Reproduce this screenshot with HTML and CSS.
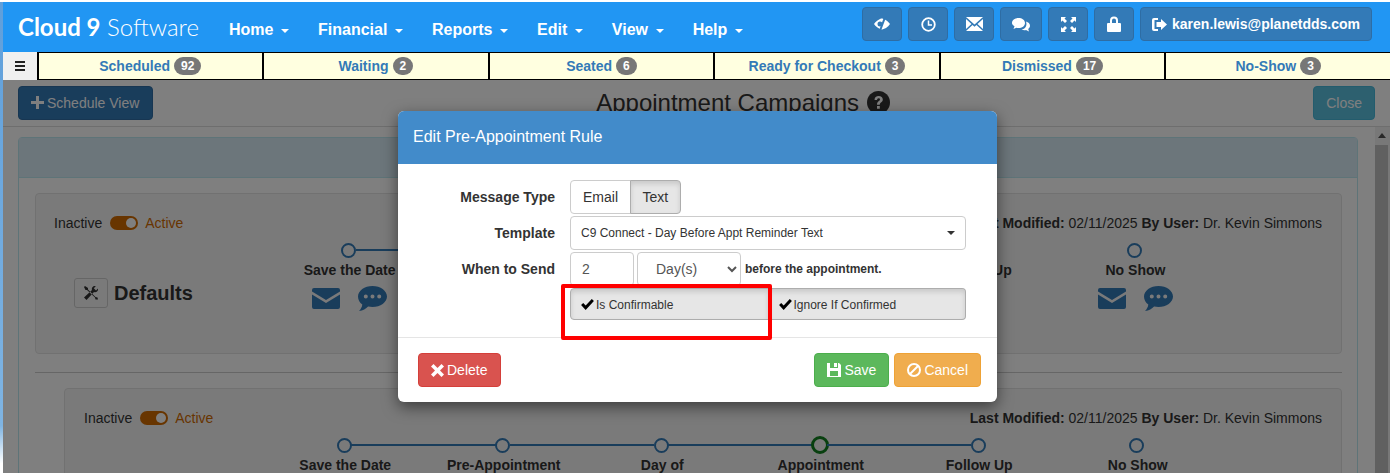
FILE: index.html
```html
<!DOCTYPE html>
<html lang="en">
<head>
    <meta charset="UTF-8">
    <meta name="viewport" content="width=device-width, initial-scale=1.0">
    <title>Appointment Campaigns</title>
    <link rel="stylesheet" href="styles.css">
</head>
<body>
    <svg class="defs" width="0" height="0">
        <symbol id="i-mail" viewBox="0 0 28 21"><path d="M2 0h24a2 2 0 0 1 2 2v1.500L14 12 0 3.500V2a2 2 0 0 1 2-2zM0 6.500l14 8.500 14-8.500V19a2 2 0 0 1-2 2H2a2 2 0 0 1-2-2z"/></symbol>
        <symbol id="i-chat" viewBox="0 0 29 25"><path fill-rule="evenodd" d="M14.500 0C22.500 0 29 4.700 29 10.500S22.500 21 14.500 21c-1.500 0-3-.2-4.400-.5C8 22.800 5 24.500 1 25c1.700-1.700 3-3.800 3.300-6.500C1.600 16.600 0 13.700 0 10.500 0 4.700 6.500 0 14.500 0zM7.800 8.500a2 2 0 1 0 0 4 2 2 0 0 0 0-4zm6.700 0a2 2 0 1 0 0 4 2 2 0 0 0 0-4zm6.700 0a2 2 0 1 0 0 4 2 2 0 0 0 0-4z"/></symbol>
        <symbol id="i-check" viewBox="0 0 14 12"><path d="M0 6.500 2.300 4.300 5 7 11.700 0 14 2.300 5 12z"/></symbol>
    </svg>

    <nav class="navbar">
        <a class="logo"><b>Cloud 9</b> Software</a>
        <ul class="menu">
            <li>Home<i class="caret"></i></li>
            <li>Financial<i class="caret"></i></li>
            <li>Reports<i class="caret"></i></li>
            <li>Edit<i class="caret"></i></li>
            <li>View<i class="caret"></i></li>
            <li>Help<i class="caret"></i></li>
        </ul>
        <div class="nav-tools">
            <button class="tool">
                <svg width="16" height="16" viewBox="0 0 16 16"><path fill="#fff" fill-rule="evenodd" d="M7 2.500C10.500 2.500 14 5 16 8 14 11 10.500 13.500 7 13.500 4.500 12.500 1.500 10.500 0 8 1.500 5.500 4.500 3.500 7 2.500zm-1 3a2.500 2.500 0 1 0 0 5 2.500 2.500 0 0 0 0-5z"/><path d="M11.500 0 5.500 16" fill="none" stroke="#337ab7" stroke-width="2"/></svg>
            </button>
            <button class="tool">
                <svg width="15" height="15" viewBox="0 0 15 15" fill="none" stroke="#fff"><circle cx="7.500" cy="7.500" r="6.300" stroke-width="1.800"/><path d="M7.500 3.500v4.500h3.500" stroke-width="1.500"/></svg>
            </button>
            <button class="tool">
                <svg width="17" height="14" viewBox="0 0 17 14" fill="#fff"><path d="M0 0h17L8.500 7.500zM0 2v10l5.500-5zM17 2v10l-5.500-5zM0 14l6.500-6 2 1.800 2-1.800 6.500 6z"/></svg>
            </button>
            <button class="tool wide">
                <svg width="18" height="15" viewBox="0 0 18 15" fill="#fff"><path d="M6.500 1C10 1 13 3 13 6s-3 5-6.500 5c-.8 0-1.500-.1-2.100-.3L1.500 12l1-2.700C1 8.400 0 7.300 0 6c0-3 3-5 6.500-5z"/><path d="M14 4.500c2.300.6 4 2.200 4 4.300 0 1.300-.7 2.400-1.800 3.200l.8 2.500-3-1.400c-1 .3-3 .3-4.500-.6 3.700-.3 6-3.800 4.500-8z"/></svg>
            </button>
            <button class="tool">
                <svg width="15" height="15" viewBox="0 0 15 15" fill="#fff"><path d="M0 0h5L3.500 1.500 6 4 4 6 1.500 3.500 0 5zM15 0v5l-1.500-1.500L11 6 9 4l2.500-2.500L10 0zM0 15v-5l1.500 1.500L4 9l2 2-2.500 2.500L5 15zM15 15h-5l1.500-1.500L9 11l2-2 2.500 2.500L15 10z"/></svg>
            </button>
            <button class="tool">
                <svg width="14" height="16" viewBox="0 0 14 16" fill="#fff"><path fill-rule="evenodd" d="M3 7V4.500a4 4 0 0 1 8 0V7h2a1 1 0 0 1 1 1v7a1 1 0 0 1-1 1H1a1 1 0 0 1-1-1V8a1 1 0 0 1 1-1zm2 0h4V4.500a2 2 0 0 0-4 0z"/></svg>
            </button>
            <button class="tool user">
                <svg width="15" height="13" viewBox="0 0 15 13" fill="#fff"><path d="M6 0H2a2 2 0 0 0-2 2v9a2 2 0 0 0 2 2h4v-2H2.500V2H6z"/><path d="M9 1l6 5.500L9 12V9H4.500V4H9z"/></svg>
                karen.lewis@planetdds.com
            </button>
        </div>
    </nav>

    <div class="statusbar">
        <button class="hamburger"><span></span><span></span><span></span></button>
        <a class="status">Scheduled <em>92</em></a>
        <a class="status">Waiting <em>2</em></a>
        <a class="status">Seated <em>6</em></a>
        <a class="status">Ready for Checkout <em>3</em></a>
        <a class="status">Dismissed <em>17</em></a>
        <a class="status">No-Show <em>3</em></a>
    </div>

    <div class="page">
        <div class="page-top">
            <button class="btn btn-primary">
                <svg width="13" height="13" viewBox="0 0 13 13" fill="#fff"><path d="M5 0h3v5h5v3H8v5H5V8H0V5h5z"/></svg>
                Schedule View
            </button>
            <h1>Appointment Campaigns
                <svg width="23" height="23" viewBox="0 0 23 23"><circle cx="11.500" cy="11.500" r="11.500" fill="#333"/><path d="M7.500 9c0-2.500 1.800-4 4.200-4s4.100 1.500 4.100 3.500c0 3-3 2.800-3 5.200h-2.800c0-3.700 3-3.500 3-5.200 0-.8-.6-1.300-1.400-1.300-.9 0-1.500.7-1.500 1.800zM10 15h2.800v2.800H10z" fill="#fff"/></svg>
            </h1>
            <button class="btn btn-info">Close</button>
        </div>

        <div class="page-body">
            <main class="main">
                <section class="panel">
                    <div class="panel-heading"></div>
                    <div class="panel-body">
                        <div class="well">
                            <div class="well-top">
                                <div class="switch">Inactive <span class="toggle"></span> <span class="on">Active</span></div>
                                <div class="modified"><b>Last Modified:</b> 02/11/2025 <b>By User:</b> Dr. Kevin Simmons</div>
                            </div>
                            <div class="well-row">
                                <div class="defaults">
                                    <span class="tool-box">
                                        <svg width="14" height="14" viewBox="0 0 14 14" fill="#333"><path d="M1 0l3 2v1.500l7.500 7.500 2 .5.500 2h-2.500l-.5-2L3 4H1.500L0 1zM11 0a3 3 0 0 0-3 4L0 11.500 2.500 14 10 6a3 3 0 0 0 4-3.500L12 4.500 9.800 2.200 11.800.2z"/></svg>
                                    </span>
                                    <strong>Defaults</strong>
                                </div>
                                <div class="timeline timeline-a">
                                    <div class="step"><i class="node"></i><span>Save the Date</span>
                                        <div class="channels"><svg class="ch-mail"><use href="#i-mail"/></svg><svg class="ch-chat"><use href="#i-chat"/></svg></div>
                                    </div>
                                    <div class="step"><i class="node"></i></div>
                                    <div class="step"><i class="node"></i></div>
                                    <div class="step"><i class="node green"></i></div>
                                    <div class="step"><i class="node"></i><span>Follow Up</span></div>
                                    <div class="step"><i class="node"></i><span>No Show</span>
                                        <div class="channels"><svg class="ch-mail"><use href="#i-mail"/></svg><svg class="ch-chat"><use href="#i-chat"/></svg></div>
                                    </div>
                                </div>
                            </div>
                        </div>
                        <hr class="divider">
                        <div class="well well-nested">
                            <div class="well-top">
                                <div class="switch">Inactive <span class="toggle"></span> <span class="on">Active</span></div>
                                <div class="modified"><b>Last Modified:</b> 02/11/2025 <b>By User:</b> Dr. Kevin Simmons</div>
                            </div>
                            <div class="timeline timeline-b">
                                <div class="step"><i class="node"></i><span>Save the Date</span></div>
                                <div class="step"><i class="node"></i><span>Pre-Appointment</span></div>
                                <div class="step"><i class="node"></i><span>Day of</span></div>
                                <div class="step"><i class="node green"></i><span>Appointment</span></div>
                                <div class="step"><i class="node"></i><span>Follow Up</span></div>
                                <div class="step"><i class="node"></i><span>No Show</span></div>
                            </div>
                        </div>
                    </div>
                </section>
            </main>
            <div class="scrollbar"><div class="scroll-up"></div><div class="scroll-thumb"></div></div>
        </div>
    </div>

    <div class="backdrop">
        <div class="modal">
            <div class="modal-header">Edit Pre-Appointment Rule</div>
            <div class="modal-body">
                <div class="form-row">
                    <label>Message Type</label>
                    <div class="btn-group">
                        <button class="seg">Email</button>
                        <button class="seg seg-active">Text</button>
                    </div>
                </div>
                <div class="form-row">
                    <label>Template</label>
                    <div class="fake-select">C9 Connect - Day Before Appt Reminder Text<i class="caret dark"></i></div>
                </div>
                <div class="form-row">
                    <label>When to Send</label>
                    <input class="num" type="text" value="2">
                    <select class="unit"><option>Day(s)</option></select>
                    <span class="suffix">before the appointment.</span>
                </div>
                <div class="form-row">
                    <label></label>
                    <div class="checks">
                        <button class="check"><svg width="13" height="11"><use href="#i-check"/></svg> Is Confirmable</button>
                        <button class="check"><svg width="13" height="11"><use href="#i-check"/></svg> Ignore If Confirmed</button>
                    </div>
                </div>
            </div>
            <div class="modal-footer">
                <button class="btn btn-danger">
                    <svg width="13" height="13" viewBox="0 0 13 13" fill="#fff"><path d="M2.500 0l4 4 4-4L13 2.500l-4 4 4 4-2.500 2.500-4-4-4 4L0 10.500l4-4-4-4z"/></svg>
                    Delete
                </button>
                <div class="footer-right">
                    <button class="btn btn-success">
                        <svg width="14" height="14" viewBox="0 0 14 14" fill="#fff"><path fill-rule="evenodd" d="M0 0h3v5h8V0h1l2 2v12H0zM7 0h3v4H7zM3 8v5h8V8z"/></svg>
                        Save
                    </button>
                    <button class="btn btn-warning">
                        <svg width="14" height="14" viewBox="0 0 14 14" fill="none" stroke="#fff" stroke-width="2"><circle cx="7" cy="7" r="6"/><path d="M3 11l8-8"/></svg>
                        Cancel
                    </button>
                </div>
            </div>
            <div class="callout"></div>
        </div>
    </div>
</body>
</html>
```
FILE: styles.css
```css
/* General */
* {
    box-sizing: border-box;
}

html, body {
    height: 100%;
}

body {
    margin: 0;
    padding: 2px 0 0 3px;
    overflow: hidden;
    position: relative;
    font-family: "Liberation Sans", Arial, sans-serif;
    font-size: 14px;
    line-height: 20px;
    color: #333;
    background: linear-gradient(to bottom, #fff 0, #fff 2px, #5f9fdb 2px, #7fb4e2 90%, #fff 98%);
}

.defs {
    position: absolute;
}

button {
    font-family: inherit;
    cursor: pointer;
}

.caret {
    display: inline-block;
    margin-left: 8px;
    vertical-align: middle;
    border-top: 4px solid #fff;
    border-left: 4px solid transparent;
    border-right: 4px solid transparent;
}

.caret.dark {
    border-top-color: #333;
    margin-left: 0;
}

/* Navbar */
.navbar {
    display: flex;
    align-items: center;
    height: 50px;
    padding: 0 18px 0 15px;
    background: #2196f3;
    color: #fff;
}

.logo {
    font-family: Lato, "Liberation Sans", sans-serif;
    font-size: 24px;
    font-weight: 300;
    white-space: nowrap;
    width: 211px;
}

.logo b {
    font-weight: 700;
}

.menu {
    display: flex;
    gap: 28.6px;
    list-style: none;
    margin: 6px 0 0;
    padding: 0;
    font-size: 16px;
    font-weight: bold;
}

.nav-tools {
    display: flex;
    gap: 6px;
    margin-left: auto;
    margin-top: -6px;
}

.tool {
    display: flex;
    align-items: center;
    justify-content: center;
    gap: 5px;
    width: 40px;
    height: 34px;
    padding: 0;
    background: #337ab7;
    border: 1px solid #2e6da4;
    border-radius: 4px;
    color: #fff;
    font-size: 14px;
    font-weight: bold;
}

.tool.wide {
    width: 42px;
}

.tool.user {
    width: 232px;
}

/* Status bar */
.statusbar {
    display: flex;
    height: 28px;
}

.hamburger {
    display: flex;
    flex-direction: column;
    justify-content: center;
    align-items: center;
    gap: 2px;
    width: 33.500px;
    padding: 0;
    border: 0;
    background: #f0f0f0;
}

.hamburger span {
    width: 10px;
    height: 2px;
    background: #222;
}

.status {
    flex: 1;
    display: flex;
    align-items: center;
    justify-content: center;
    gap: 4px;
    background: #ffffe0;
    border: 1px solid #000;
    border-left-width: 2px;
    border-right: 0;
    color: #337ab7;
    font-size: 14px;
    font-weight: bold;
}

.status em {
    font-style: normal;
    font-size: 12px;
    line-height: 12px;
    padding: 3px 7px;
    border-radius: 10px;
    background: #777;
    color: #fff;
}

/* Page */
.page {
    background: #fff;
    height: 393px;
    overflow: hidden;
}

.page-top {
    display: flex;
    align-items: center;
    justify-content: space-between;
    height: 47px;
    padding: 0 0 1px 15px;
    border-bottom: 1px solid #ddd;
}

.page-top h1 {
    display: flex;
    align-items: center;
    gap: 8px;
    margin: 0 0 0 20px;
    font-size: 24px;
    font-weight: normal;
}

.page-top .btn-primary {
    width: 135px;
}

.page-top .btn-info {
    margin-right: 15px;
}

.page-body {
    display: flex;
}

.main {
    flex: 1;
    padding: 10px 17px 0 15px;
}

.scrollbar {
    width: 15px;
    height: 347px;
    background: #f1f1f1;
}

.scroll-up {
    height: 18px;
    position: relative;
}

.scroll-up::before {
    content: "";
    position: absolute;
    top: 6px;
    left: 3px;
    border-bottom: 5px solid #505050;
    border-left: 4px solid transparent;
    border-right: 4px solid transparent;
}

.scroll-thumb {
    width: 13px;
    height: 329px;
    background: #c1c1c1;
}

/* Buttons */
.btn {
    display: inline-flex;
    align-items: center;
    gap: 3px;
    height: 34px;
    padding: 0 12px;
    border: 1px solid transparent;
    border-radius: 4px;
    font-size: 14px;
    color: #fff;
}

.btn-primary { background: #337ab7; border-color: #2e6da4; }
.btn-info { background: #5bc0de; border-color: #46b8da; }
.btn-danger { background: #d9534f; border-color: #d43f3a; padding-right: 13px; }
.btn-success { background: #5cb85c; border-color: #4cae4c; }
.btn-warning { background: #f0ad4e; border-color: #eea236; }

/* Panel */
.panel {
    border: 1px solid #bce8f1;
    border-radius: 4px;
    height: 400px;
}

.panel-heading {
    height: 40px;
    background: #d9edf7;
    border-bottom: 1px solid #bce8f1;
}

.panel-body {
    padding: 15px 15px 0 16px;
}

.well {
    height: 161px;
    padding: 19px 19px 0 18px;
    background: #f5f5f5;
    border: 1px solid #e3e3e3;
    border-radius: 4px;
}

.well-nested {
    margin-left: 29px;
    padding-left: 19px;
}

.divider {
    margin: 18px 0 15px;
    border: 0;
    border-top: 1px solid #ccc;
}

.well-top {
    display: flex;
    justify-content: space-between;
}

.switch {
    display: flex;
    align-items: center;
    gap: 8px;
}

.toggle {
    position: relative;
    width: 28px;
    height: 14px;
    border-radius: 7px;
    background: #d06a00;
}

.toggle::after {
    content: "";
    position: absolute;
    top: 2px;
    right: 2px;
    width: 10px;
    height: 10px;
    border-radius: 50%;
    background: #fff;
}

.on {
    margin-left: -1px;
    color: #d06a00;
}

.well-row {
    display: flex;
}

.defaults {
    display: flex;
    align-items: center;
    gap: 6px;
    width: 216px;
    height: 30px;
    margin-top: 45px;
    padding-left: 20px;
}

.tool-box {
    display: flex;
    align-items: center;
    justify-content: center;
    width: 34px;
    height: 30px;
    border: 1px solid #ccc;
    border-radius: 3px;
}

.defaults strong {
    font-size: 20px;
}

/* Timeline */
.timeline {
    display: flex;
    margin-top: 10px;
}

.timeline-a {
    width: 943px;
}

.timeline-b {
    width: 951px;
    margin-left: 181px;
}

.step {
    position: relative;
    flex: 1;
    display: flex;
    flex-direction: column;
    align-items: center;
    font-weight: bold;
}

.step span {
    margin-top: 2px;
    margin-left: 2px;
}

.node {
    width: 15px;
    height: 15px;
    background: #f5f5f5;
    border: 2.5px solid #337ab7;
    border-radius: 50%;
}

.node.green {
    width: 18px;
    height: 18px;
    margin: -2px 0 -1px;
    border: 3px solid #128020;
}

.step:not(:nth-child(n+5))::after {
    content: "";
    position: absolute;
    top: 6px;
    left: calc(50% + 7px);
    width: calc(100% - 14px);
    height: 2px;
    background: #337ab7;
}

.channels {
    display: flex;
    align-items: center;
    gap: 18px;
    margin: 6px 0 0 2px;
    fill: #337ab7;
}

.ch-mail {
    width: 28px;
    height: 21px;
}

.ch-chat {
    width: 29px;
    height: 25px;
}

/* Modal */
.backdrop {
    position: absolute;
    top: 80px;
    left: 3px;
    right: 0;
    bottom: 0;
    background: rgba(0, 0, 0, 0.5);
}

.modal {
    position: relative;
    width: 599px;
    margin: 31px 0 0 395px;
    background: #fff;
    border-radius: 6px;
    box-shadow: 0 5px 15px rgba(0, 0, 0, 0.5);
}

.modal-header {
    height: 53px;
    padding: 16px 15px;
    background: #428bca;
    border-radius: 6px 6px 0 0;
    color: #fff;
    font-size: 16px;
}

.modal-body {
    display: flex;
    flex-direction: column;
    gap: 2px;
    height: 173px;
    padding-top: 16px;
}

.form-row {
    display: flex;
    align-items: center;
}

.form-row label {
    width: 157px;
    margin-right: 15px;
    text-align: right;
    font-weight: bold;
}

.btn-group {
    display: flex;
}

.seg {
    height: 34px;
    padding: 0 12px;
    background: #fff;
    border: 1px solid #ccc;
    border-radius: 4px 0 0 4px;
    color: #333;
    font-size: 14px;
}

.seg-active {
    margin-left: -1px;
    padding: 0 11.500px;
    background: #e6e6e6;
    border-color: #adadad;
    border-radius: 0 4px 4px 0;
    box-shadow: inset 0 3px 5px rgba(0, 0, 0, 0.125);
}

.fake-select {
    display: flex;
    align-items: center;
    justify-content: space-between;
    width: 396px;
    height: 34px;
    padding: 0 10px;
    border: 1px solid #ccc;
    border-radius: 4px;
    font-size: 12px;
}

.num {
    width: 64px;
    height: 34px;
    padding: 0 11px;
    border: 1px solid #ccc;
    border-radius: 4px;
    color: #555;
    font-family: inherit;
    font-size: 14px;
}

.unit {
    width: 104px;
    height: 34px;
    margin-left: 3px;
    padding-left: 14px;
    background: #fff;
    border: 1px solid #ccc;
    border-radius: 4px;
    color: #555;
    font-family: inherit;
    font-size: 14px;
}

.suffix {
    margin-left: 4px;
    font-size: 12px;
    font-weight: bold;
}

.checks {
    display: flex;
    width: 396px;
}

.check {
    flex: 1;
    height: 32px;
    padding: 1px 10px 0;
    display: flex;
    align-items: center;
    gap: 2px;
    background: #e6e6e6;
    border: 1px solid #adadad;
    border-radius: 4px 0 0 4px;
    box-shadow: inset 0 3px 5px rgba(0, 0, 0, 0.125);
    color: #333;
    font-size: 12px;
}

.check + .check {
    border-left: 0;
    border-radius: 0 4px 4px 0;
}

.modal-footer {
    display: flex;
    justify-content: space-between;
    padding: 15px 16px 15px 20px;
    border-top: 1px solid #e5e5e5;
}

.footer-right {
    display: flex;
    gap: 5px;
}

/* Red annotation box */
.callout {
    position: absolute;
    top: 173px;
    left: 163px;
    width: 211px;
    height: 56px;
    border: 4px solid #f00;
    border-radius: 2px;
}
```
